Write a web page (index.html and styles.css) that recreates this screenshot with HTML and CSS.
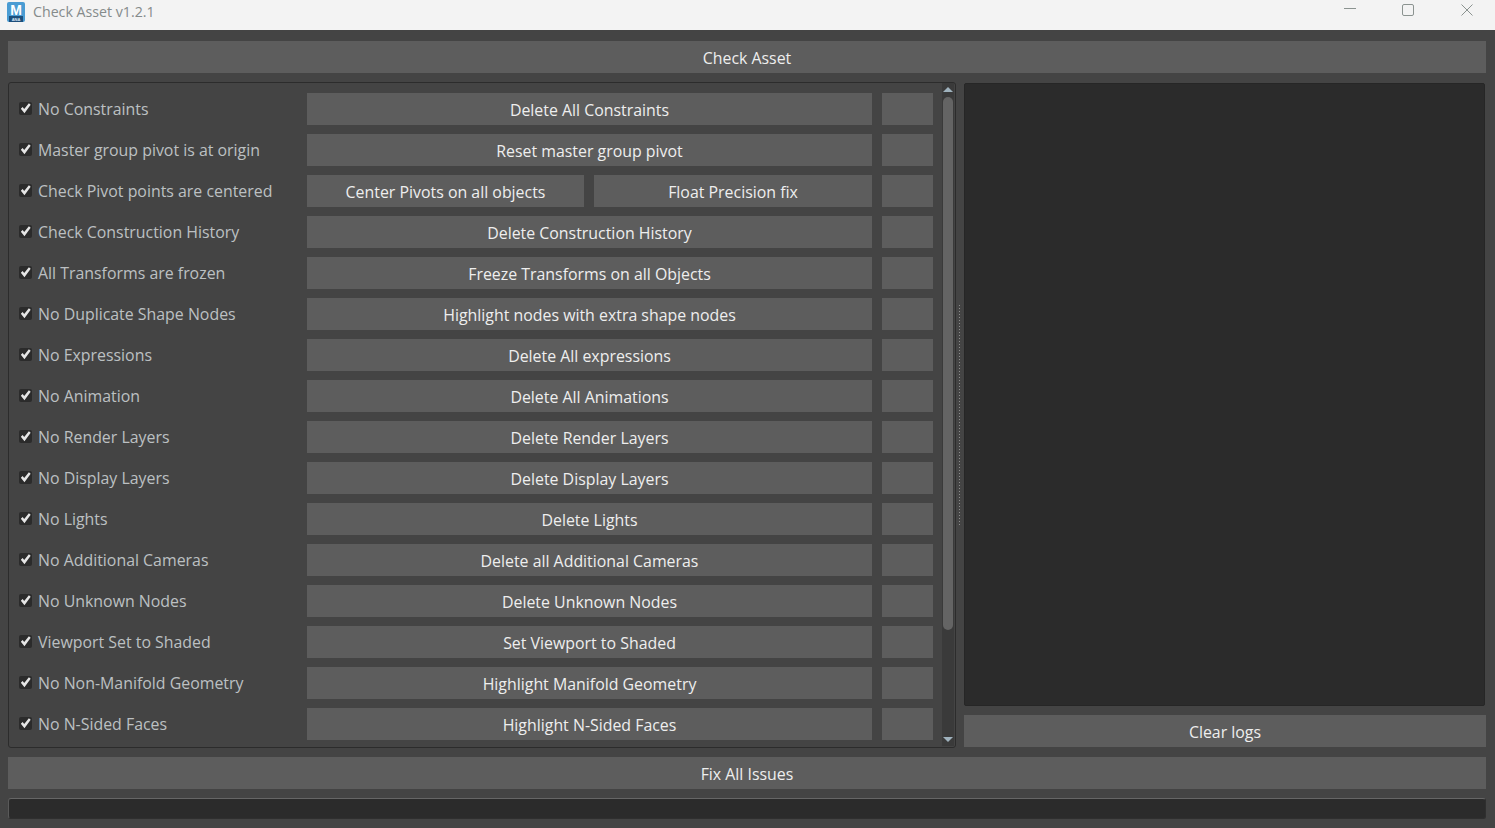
FILE: index.html
```html
<!DOCTYPE html>
<html lang="en">
<head>
  <meta charset="UTF-8" />
  <title>Check Asset v1.2.1</title>
  <link rel="stylesheet" href="styles.css">
</head>
<body>

  <div class="titlebar">
    <svg class="app-icon" width="20" height="20" viewBox="0 0 20 20">
      <rect x="1" y="0" width="18" height="20" rx="2" fill="#4a9cd3"/>
      <rect x="3" y="14" width="14" height="6" fill="#1d4f7c"/>
      <text x="10" y="12.5" class="app-icon-m">M</text>
      <text x="10" y="19" class="app-icon-sub">ANA</text>
    </svg>
    <span class="title">Check Asset v1.2.1</span>
    <div class="win-controls">
      <svg width="12" height="12" viewBox="0 0 12 12"><path d="M0 4.5H12" stroke="#8b9390" fill="none"/></svg>
      <svg width="12" height="12" viewBox="0 0 12 12"><rect x="0.5" y="0.5" width="11" height="11" rx="1.5" stroke="#8b9390" fill="none"/></svg>
      <svg class="win-close" width="12" height="12" viewBox="0 0 12 12"><path d="M0.5 0.5L11.5 11.5M11.5 0.5L0.5 11.5" stroke="#8b9390" fill="none"/></svg>
    </div>
  </div>

  <div class="main">
    <button class="btn bar">Check Asset</button>

    <div class="middle">
      <div class="panel">
        <div class="rows">
          <div class="row"><label class="check"><input type="checkbox" checked>No Constraints</label><button class="btn">Delete All Constraints</button><button class="btn"></button></div>
          <div class="row"><label class="check"><input type="checkbox" checked>Master group pivot is at origin</label><button class="btn">Reset master group pivot</button><button class="btn"></button></div>
          <div class="row"><label class="check"><input type="checkbox" checked>Check Pivot points are centered</label><div class="split"><button class="btn">Center Pivots on all objects</button><button class="btn">Float Precision fix</button></div><button class="btn"></button></div>
          <div class="row"><label class="check"><input type="checkbox" checked>Check Construction History</label><button class="btn">Delete Construction History</button><button class="btn"></button></div>
          <div class="row"><label class="check"><input type="checkbox" checked>All Transforms are frozen</label><button class="btn">Freeze Transforms on all Objects</button><button class="btn"></button></div>
          <div class="row"><label class="check"><input type="checkbox" checked>No Duplicate Shape Nodes</label><button class="btn">Highlight nodes with extra shape nodes</button><button class="btn"></button></div>
          <div class="row"><label class="check"><input type="checkbox" checked>No Expressions</label><button class="btn">Delete All expressions</button><button class="btn"></button></div>
          <div class="row"><label class="check"><input type="checkbox" checked>No Animation</label><button class="btn">Delete All Animations</button><button class="btn"></button></div>
          <div class="row"><label class="check"><input type="checkbox" checked>No Render Layers</label><button class="btn">Delete Render Layers</button><button class="btn"></button></div>
          <div class="row"><label class="check"><input type="checkbox" checked>No Display Layers</label><button class="btn">Delete Display Layers</button><button class="btn"></button></div>
          <div class="row"><label class="check"><input type="checkbox" checked>No Lights</label><button class="btn">Delete Lights</button><button class="btn"></button></div>
          <div class="row"><label class="check"><input type="checkbox" checked>No Additional Cameras</label><button class="btn">Delete all Additional Cameras</button><button class="btn"></button></div>
          <div class="row"><label class="check"><input type="checkbox" checked>No Unknown Nodes</label><button class="btn">Delete Unknown Nodes</button><button class="btn"></button></div>
          <div class="row"><label class="check"><input type="checkbox" checked>Viewport Set to Shaded</label><button class="btn">Set Viewport to Shaded</button><button class="btn"></button></div>
          <div class="row"><label class="check"><input type="checkbox" checked>No Non-Manifold Geometry</label><button class="btn">Highlight Manifold Geometry</button><button class="btn"></button></div>
          <div class="row"><label class="check"><input type="checkbox" checked>No N-Sided Faces</label><button class="btn">Highlight N-Sided Faces</button><button class="btn"></button></div>
        </div>
        <div class="scrollbar">
          <span class="arrow-up"></span>
          <span class="thumb"></span>
          <span class="arrow-down"></span>
        </div>
      </div>

      <div class="splitter"><span class="dots"></span></div>

      <div class="side">
        <div class="logs"></div>
        <button class="btn clear">Clear logs</button>
      </div>
    </div>

    <button class="btn bar">Fix All Issues</button>
    <div class="progress"></div>
  </div>

</body>
</html>
```

FILE: styles.css
```css
html, body {
  margin: 0;
  height: 100%;
  overflow: hidden;
}
body {
  font-family: "Open Sans", "Noto Sans", Arial, sans-serif;
  font-size: 15.9px;
  background: #444444;
}
.titlebar {
  height: 30px;
  background: #f3f3f3;
  display: flex;
  align-items: center;
  padding-left: 6px;
  box-sizing: border-box;
}
.app-icon {
  margin-right: 7px;
  margin-top: -7px;
}
.app-icon-m {
  font-family: "Liberation Sans", Arial, sans-serif;
  font-size: 14px;
  font-weight: 700;
  fill: #ffffff;
  text-anchor: middle;
}
.app-icon-sub {
  font-family: "Liberation Sans", Arial, sans-serif;
  font-size: 4px;
  font-weight: 700;
  fill: #dbe9f3;
  text-anchor: middle;
}
.title {
  font-size: 14.2px;
  color: #858b8b;
  margin-top: -7px;
}
.win-controls {
  margin-left: auto;
  display: flex;
  gap: 46px;
  padding-right: 22px;
  margin-top: -11px;
}
.win-close {
  margin-left: 1px;
}
.main {
  padding: 11px 9px 0 8px;
  display: flex;
  flex-direction: column;
  gap: 9px;
}
.btn {
  display: block;
  height: 32px;
  padding: 2px 0 0;
  border: none;
  background: #5d5d5d;
  color: #eeeeee;
  font-family: inherit;
  font-size: 15.9px;
  text-align: center;
}
.bar {
  width: 100%;
}
.middle {
  display: flex;
  height: 666px;
}
.panel {
  width: 948px;
  box-sizing: border-box;
  border: 1px solid #2c2c2c;
  border-radius: 3px;
  display: flex;
}
.rows {
  width: 933px;
  padding-top: 10px;
  display: flex;
  flex-direction: column;
  gap: 9px;
}
.row {
  display: grid;
  grid-template-columns: 278px 565px 51px;
  column-gap: 10px;
  padding-left: 10px;
}
.split {
  display: grid;
  grid-template-columns: 277px 278px;
  column-gap: 10px;
}
.check {
  display: flex;
  align-items: center;
  color: #bcc0c2;
  white-space: nowrap;
}
.check input {
  appearance: none;
  width: 13px;
  height: 13px;
  margin: -1px 6px 0 0;
  background: #2b2b2b;
  border-radius: 2px;
  position: relative;
  flex: none;
}
.check input::after {
  content: "";
  position: absolute;
  inset: 0;
  background: #e6e6e6;
  clip-path: polygon(14% 52%, 28% 38%, 40% 54%, 76% 10%, 90% 22%, 42% 86%);
}
.scrollbar {
  width: 12px;
  background: #3a3a3a;
  display: flex;
  flex-direction: column;
  align-items: center;
  padding: 4px 0;
  box-sizing: border-box;
  margin-bottom: 1px;
}
.arrow-up {
  border: solid transparent;
  border-width: 0 5px 5px;
  border-bottom-color: #9fb2bd;
}
.arrow-down {
  border: solid transparent;
  border-width: 5px 5px 0;
  border-top-color: #9fb2bd;
  margin-top: auto;
}
.thumb {
  width: 10px;
  height: 533px;
  margin-top: 5px;
  background: #646464;
  border-radius: 5px;
}
.splitter {
  width: 8px;
  display: flex;
  align-items: center;
  justify-content: center;
}
.dots {
  width: 1px;
  height: 220px;
  margin-right: 2px;
  background: repeating-linear-gradient(to bottom, #8c8c8c 0 1px, transparent 1px 3px);
}
.side {
  flex: 1;
  display: flex;
  flex-direction: column;
  padding: 1px 0 1px;
  gap: 9px;
}
.logs {
  flex: 1;
  margin-right: 1px;
  background: #2b2b2b;
  border: 1px solid #262626;
  border-radius: 2px;
}
.clear {
  width: 100%;
  flex: none;
  margin-right: 1px;
}
.progress {
  height: 21px;
  box-sizing: border-box;
  background: #2b2b2b;
  border: 1px solid #2f2f2f;
  border-top-color: #666666;
  border-left-color: #5a5a5a;
  border-radius: 3px;
}
```
